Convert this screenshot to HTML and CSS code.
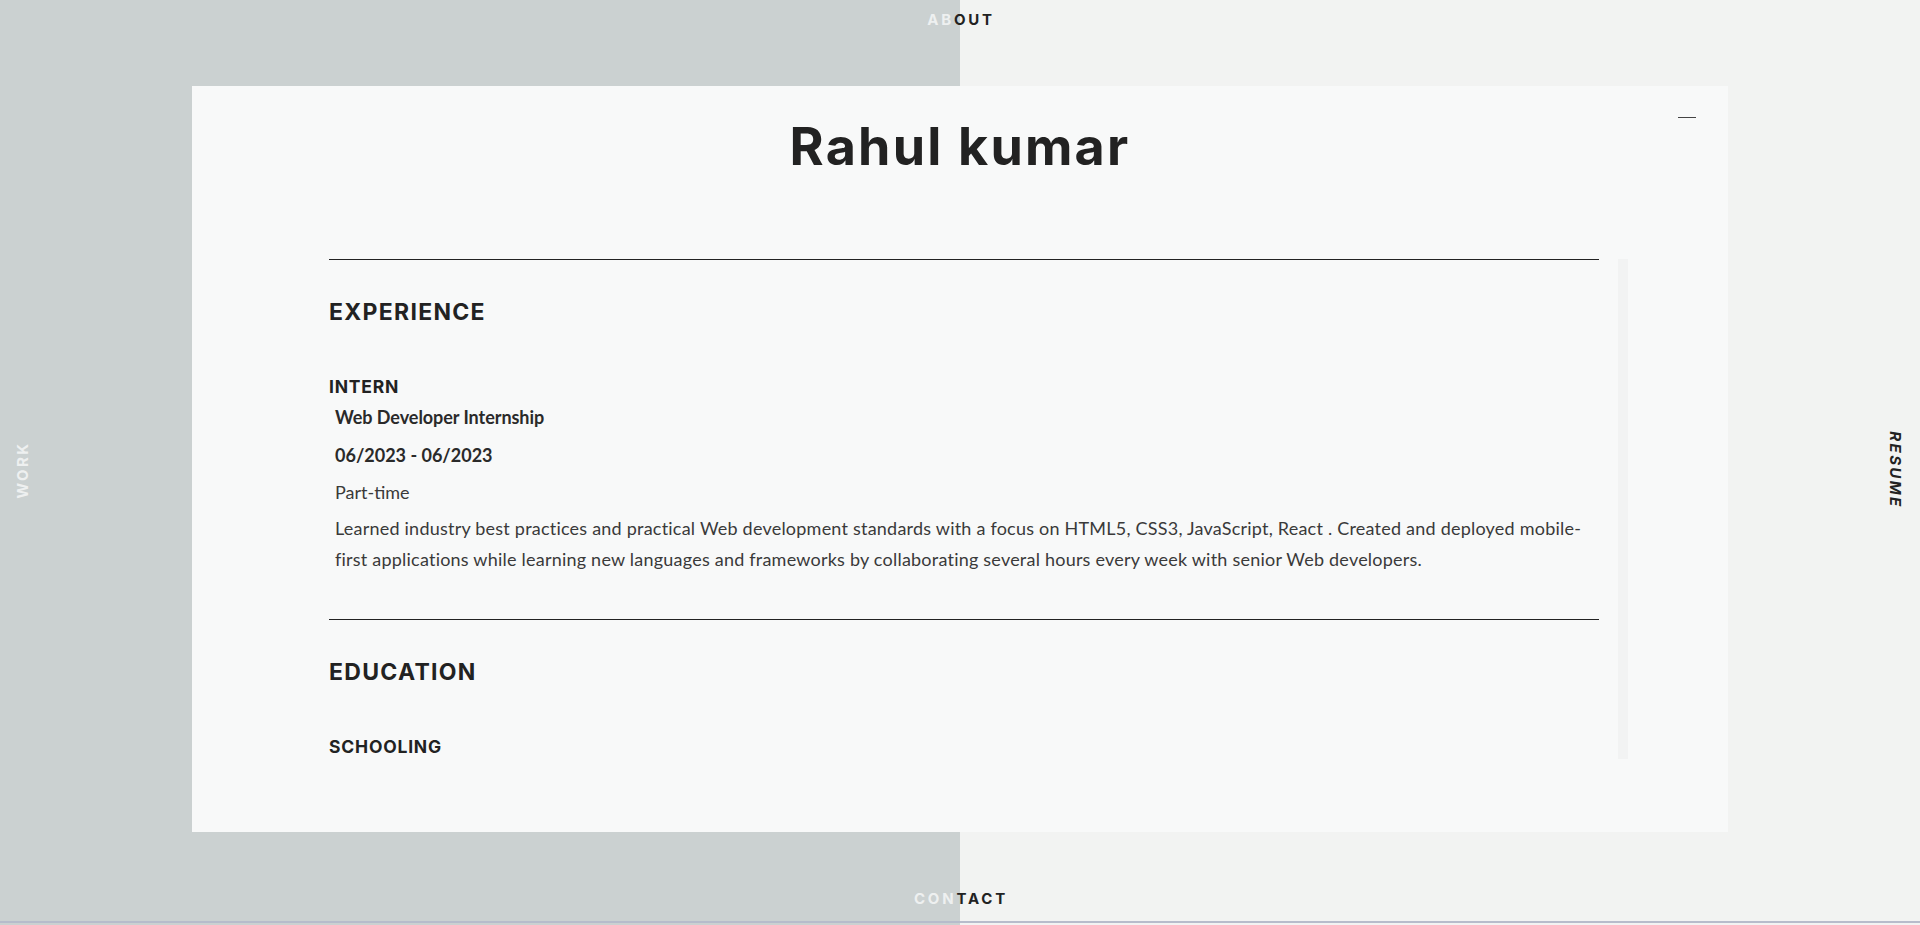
FILE: index.html
```html
<!DOCTYPE html>
<html lang="en">
<head>
<meta charset="utf-8">
<title>Rahul kumar — Resume</title>
<link rel="stylesheet" href="styles.css">
</head>
<body>
<div class="page">
  <header class="nav nav-top"><a class="split-link" href="#about"><span class="light">AB</span>OUT</a></header>
  <a class="side side-left" href="#work">WORK</a>
  <a class="side side-right" href="#resume">RESUME</a>
  <main class="modal">
    <button class="close" aria-label="Close"><span></span></button>
    <h1 class="name">Rahul kumar</h1>
    <div class="scroll-area">
      <div class="content">
        <section class="block">
          <h2 class="block-title">EXPERIENCE</h2>
          <h3 class="item-title">INTERN</h3>
          <div class="item">
            <p class="role">Web Developer Internship</p>
            <p class="dates">06/2023 - 06/2023</p>
            <p class="type">Part-time</p>
            <p class="desc">Learned industry best practices and practical Web development standards with a focus on HTML5, CSS3, JavaScript, React . Created and deployed mobile-first applications while learning new languages and frameworks by collaborating several hours every week with senior Web developers.</p>
          </div>
        </section>
        <section class="block">
          <h2 class="block-title">EDUCATION</h2>
          <h3 class="item-title">SCHOOLING</h3>
        </section>
      </div>
      <div class="track" aria-hidden="true"></div>
    </div>
  </main>
  <footer class="nav nav-bottom"><a class="split-link" href="#contact"><span class="light">CON</span>TACT</a></footer>
</div>
</body>
</html>
```

FILE: styles.css
```css
* { box-sizing: border-box; }
html, body { margin: 0; padding: 0; }
body {
  width: 1920px;
  height: 925px;
  overflow: hidden;
  background: linear-gradient(90deg, #cbd1d1 50%, #f2f3f2 50%);
  font-family: Lato, "Open Sans", sans-serif;
  color: #222;
}
.page {
  position: relative;
  height: 923px;
  display: flex;
  flex-direction: column;
  border-bottom: 2px solid #b7bccb;
}
.nav {
  font-family: Inter, "DejaVu Sans", sans-serif;
  font-weight: 700;
  font-size: 15px;
  letter-spacing: 2.8px;
  text-align: center;
}
.nav-top { height: 86px; padding-top: 10px; }
.nav-bottom { flex: 1; padding-top: 57px; }
.split-link {
  display: inline-block;
  text-decoration: none;
  color: #222;
  line-height: 18px;
  margin-right: -2px;
}
.split-link .light { color: #eef0f0; }
.side {
  position: absolute;
  top: 470px;
  font-family: Inter, "DejaVu Sans", sans-serif;
  font-weight: 700;
  font-size: 15px;
  letter-spacing: 2.4px;
  text-decoration: none;
  line-height: 16px;
  white-space: nowrap;
}
.side-left {
  left: 23px;
  color: #eef0f0;
  transform: translate(-50%, -50%) rotate(-90deg);
}
.side-right {
  left: 1895px;
  color: #222;
  font-style: italic;
  transform: translate(-50%, -50%) rotate(90deg);
}
.modal {
  position: relative;
  width: 1536px;
  height: 746px;
  margin: 0 auto;
  background: #f8f9f9;
  display: flex;
  flex-direction: column;
}
.close {
  position: absolute;
  top: 29px;
  right: 32px;
  width: 18px;
  height: 4px;
  padding: 0;
  border: 0;
  background: none;
  cursor: pointer;
}
.close span {
  display: block;
  width: 18px;
  height: 1.5px;
  background: #444;
  margin-top: 1px;
}
.name {
  margin: 0;
  padding-top: 29px;
  text-align: center;
  font-family: Inter, "DejaVu Sans", sans-serif;
  font-weight: 700;
  font-size: 52px;
  line-height: 64px;
  letter-spacing: 2.2px;
  color: #222;
}
.scroll-area {
  margin-top: 80px;
  margin-left: 137px;
  height: 500px;
  display: flex;
  gap: 19px;
}
.content {
  width: 1270px;
  height: 500px;
  overflow: hidden;
}
.track {
  width: 10px;
  height: 500px;
  background: #f2f3f3;
}
.block {
  border-top: 1.5px solid #222;
  padding-top: 38px;
  padding-bottom: 44px;
}
.block-title {
  margin: 0;
  font-family: Inter, "DejaVu Sans", sans-serif;
  font-weight: 700;
  font-size: 23px;
  line-height: 28px;
  letter-spacing: 1.3px;
  color: #222;
}
.item-title {
  margin: 50px 0 0;
  font-family: Inter, "DejaVu Sans", sans-serif;
  font-weight: 700;
  font-size: 17.5px;
  line-height: 22px;
  letter-spacing: 0.8px;
  color: #222;
}
.item { padding-left: 6px; }
.item p { margin: 0; font-size: 18px; line-height: 38px; color: #3a3a3a; }
.role { font-weight: 700; color: #2a2a2a !important; letter-spacing: -0.05px; }
.dates { font-weight: 700; color: #2a2a2a !important; }
.type { font-weight: 400; line-height: 36px !important; }
.desc { line-height: 31px !important; padding-top: 3px; font-weight: 400; letter-spacing: 0.22px; }
```
